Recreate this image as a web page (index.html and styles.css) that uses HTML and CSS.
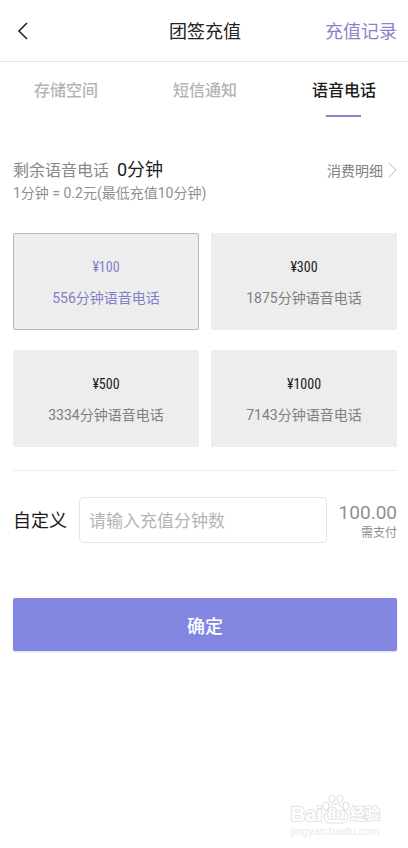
FILE: index.html
```html
<!DOCTYPE html>
<html lang="zh-CN">
<head>
<meta charset="utf-8">
<meta name="viewport" content="width=device-width, initial-scale=1">
<title>团签充值</title>
<link rel="stylesheet" href="styles.css">
</head>
<body>
<header class="topbar">
  <button class="back" type="button" aria-label="返回">
    <svg width="12" height="20" viewBox="0 0 12 20" fill="none" stroke="#222" stroke-width="1.6"><path d="M10 1 2 9l8 8"/></svg>
  </button>
  <h1 class="title">团签充值</h1>
  <a class="history" href="#history">充值记录</a>
</header>
<nav class="tabs">
  <a class="tab" href="#storage">存储空间</a>
  <a class="tab" href="#sms">短信通知</a>
  <a class="tab tab-active" href="#voice" aria-current="page">语音电话</a>
</nav>
<main class="content">
  <section class="balance">
    <div class="balance-row">
      <p class="remaining">剩余语音电话 <strong class="minutes">0分钟</strong></p>
      <a class="detail" href="#detail">消费明细
        <svg width="9" height="16" viewBox="0 0 9 16" fill="none" stroke="#b8b8b8" stroke-width="1"><path d="m1 0 7 7-7 7"/></svg>
      </a>
    </div>
    <p class="rate">1分钟 = 0.2元(最低充值10分钟)</p>
  </section>
  <section class="plans">
    <button class="plan plan-active" type="button"><span class="price">¥100</span><span class="amount">556分钟语音电话</span></button>
    <button class="plan" type="button"><span class="price">¥300</span><span class="amount">1875分钟语音电话</span></button>
    <button class="plan" type="button"><span class="price">¥500</span><span class="amount">3334分钟语音电话</span></button>
    <button class="plan" type="button"><span class="price">¥1000</span><span class="amount">7143分钟语音电话</span></button>
  </section>
  <form class="custom">
    <label class="custom-label" for="minutes">自定义</label>
    <input class="custom-input" id="minutes" type="text" inputmode="numeric" placeholder="请输入充值分钟数">
    <p class="due"><span class="due-value">100.00</span><span class="due-label">需支付</span></p>
  </form>
  <button class="submit" type="button">确定</button>
</main>
<footer class="watermark">
  <div class="brand">
    <span class="brand-name">Bai</span>
    <span class="paw">
      <svg class="paw-icon" width="28" height="30" viewBox="0 0 28 30" fill="#fff" stroke="#dedede" stroke-width="1"><ellipse cx="4" cy="12" rx="3" ry="4"/><ellipse cx="10" cy="5" rx="3" ry="4"/><ellipse cx="18" cy="5" rx="3" ry="4"/><ellipse cx="24" cy="12" rx="3" ry="4"/><path d="M14 10c-4 0-6 4-9 7-5 5-3 12 3 12h12c6 0 8-7 3-12-3-3-5-7-9-7Z"/></svg>
      <span class="paw-text">du</span>
    </span>
    <span class="brand-cn">经验</span>
  </div>
  <div class="site">jingyan.baidu.com</div>
</footer>
</body>
</html>
```
FILE: styles.css
```css
* {
  box-sizing: border-box;
}

body {
  margin: 0;
  min-height: 100vh;
  display: flex;
  flex-direction: column;
  background: #fff;
  color: #222;
  font-family: Roboto, "Noto Sans CJK SC", sans-serif;
}

h1,
p {
  margin: 0;
}

a {
  color: inherit;
  text-decoration: none;
}

button,
input {
  font: inherit;
}

.topbar {
  display: grid;
  grid-template-columns: 1fr auto 1fr;
  align-items: center;
  height: 62px;
  padding: 2px 11px 0 13px;
  border-bottom: 1px solid #e6e6e6;
}

.back {
  display: flex;
  justify-self: start;
  padding: 4px;
  border: 0;
  background: none;
}

.title {
  font-size: 18px;
  line-height: 24px;
  font-weight: 400;
}

.history {
  justify-self: end;
  color: #8685c5;
  font-size: 18px;
  line-height: 24px;
}

.tabs {
  display: flex;
  justify-content: space-between;
  padding: 17px 32px 0 34px;
}

.tab {
  display: flex;
  flex-direction: column;
  align-items: center;
  color: #b4b4b4;
  font-size: 16px;
  line-height: 24px;
  font-weight: 500;
}

.tab-active {
  color: #1c1c1c;
}

.tab-active::after {
  content: "";
  width: 35px;
  height: 2px;
  margin-top: 12px;
  background: #8884cc;
}

.content {
  padding: 41px 11px 0 13px;
}

.balance-row {
  display: flex;
  justify-content: space-between;
  align-items: center;
}

.remaining {
  color: #888;
  font-size: 16px;
  line-height: 24px;
}

.minutes {
  margin-left: 4px;
  color: #1c1c1c;
  font-size: 18px;
  font-weight: 400;
}

.detail {
  display: flex;
  align-items: center;
  gap: 5px;
  color: #808080;
  font-size: 14px;
  line-height: 20px;
}

.rate {
  color: #909090;
  font-size: 14px;
  line-height: 20px;
}

.plans {
  display: grid;
  grid-template-columns: 1fr 1fr;
  gap: 20px 12px;
  padding: 30px 0 23px;
  border-bottom: 1px solid #ededed;
}

.plan {
  display: flex;
  flex-direction: column;
  align-items: center;
  justify-content: center;
  gap: 11px;
  min-height: 97px;
  padding: 6px 4px 4px;
  border: 1px solid #ededed;
  border-radius: 2px;
  background: #ededed;
  color: #1c1c1c;
}

.price {
  font-family: "Roboto Condensed", Roboto, sans-serif;
  font-size: 14px;
  line-height: 20px;
}

.amount {
  color: #808080;
  font-size: 14px;
  line-height: 20px;
}

.plan-active {
  border-color: #b3b3d3;
  color: #8280c8;
}

.plan-active .amount {
  color: inherit;
}

.custom {
  display: flex;
  align-items: center;
  gap: 12px;
  padding-top: 26px;
}

.custom-label {
  padding-top: 2px;
  color: #1c1c1c;
  font-size: 18px;
  line-height: 24px;
}

.custom-input {
  flex: 1;
  min-width: 0;
  height: 46px;
  padding: 2px 9px 0;
  border: 1px solid #e4e4e4;
  border-radius: 5px;
  background: #fff;
  color: #1c1c1c;
  font-size: 17px;
}

.custom-input::placeholder {
  color: #b4b4b4;
}

.due {
  display: flex;
  flex-direction: column;
  align-items: flex-end;
  padding-top: 2px;
  color: #909090;
}

.due-value {
  font-size: 19px;
  line-height: 24px;
}

.due-label {
  font-size: 12px;
  line-height: 16px;
}

.submit {
  width: 100%;
  height: 53px;
  margin-top: 55px;
  border: 0;
  border-radius: 2px;
  background: #8286e0;
  box-shadow: 0 1px 2px #d8d8ea;
  color: #fff;
  font-size: 18px;
  font-weight: 500;
}

.watermark {
  align-self: flex-end;
  margin-top: auto;
  padding: 0 28px 10px 0;
  color: #fff;
  font-family: "Liberation Sans", "Noto Sans CJK SC", sans-serif;
  font-weight: 700;
  -webkit-text-stroke: 2px #e4e4e4;
  paint-order: stroke fill;
}

.brand {
  display: flex;
  align-items: flex-end;
  height: 30px;
  font-size: 20px;
  line-height: 20px;
}

.paw {
  display: grid;
  place-items: end center;
}

.paw > * {
  grid-area: 1 / 1;
}

.paw-icon {
  paint-order: normal;
}

.paw-text {
  padding-bottom: 2px;
  font-size: 14px;
  line-height: 16px;
}

.brand-cn {
  font-size: 15px;
}

.site {
  color: #e9e9e9;
  font-size: 11px;
  line-height: 14px;
  font-weight: 400;
  -webkit-text-stroke: 0;
}
```
